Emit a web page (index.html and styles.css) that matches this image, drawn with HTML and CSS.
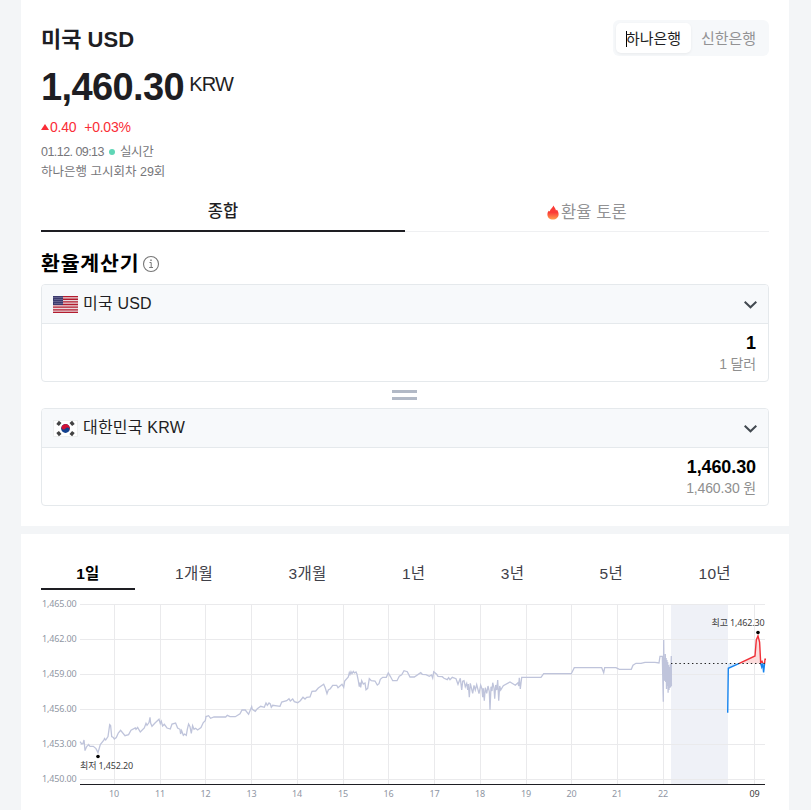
FILE: index.html
```
<!DOCTYPE html>
<html lang="ko">
<head>
    <meta charset="UTF-8">
    <meta name="viewport" content="width=device-width, initial-scale=1.0">
    <title>미국 USD 환율</title>
    <link rel="stylesheet" href="styles.css">
</head>
<body>
    <main>
        <section class="card summary">
            <header class="top">
                <h1>미국 USD</h1>
                <div class="bank-switch">
                    <button class="bank active">하나은행</button>
                    <button class="bank">신한은행</button>
                </div>
            </header>

            <div class="price"><strong>1,460.30</strong><span>KRW</span></div>
            <div class="change"><i class="up"></i><span>0.40</span><span>+0.03%</span></div>
            <div class="meta"><span class="num">01.12. 09:13</span><i class="dot"></i><span>실시간</span></div>
            <div class="meta round">하나은행 고시회차 29회</div>

            <nav class="tabs">
                <a class="tab active">종합</a>
                <a class="tab">
                    <svg width="12" height="15" viewBox="0 0 12 15">
                        <defs>
                            <linearGradient id="fire" x1="0" y1="0" x2="0" y2="1">
                                <stop offset="0.5" stop-color="#fa3c37"/>
                                <stop offset="1" stop-color="#ffa04d"/>
                            </linearGradient>
                        </defs>
                        <path fill="url(#fire)" d="M6.6 0.5C7 2.4 8.6 3.2 9 5.6L10 4.8C11 6.2 11.6 7.8 11.6 9.2C11.6 12.4 9.2 14.5 5.9 14.5C2.6 14.5 0.4 12.3 0.4 9.4C0.4 7.7 1 6.6 1.8 5.7L2.7 6.5C3.2 3.7 5.6 3 6.6 0.5Z"/>
                    </svg>환율 토론</a>
            </nav>

            <!-- Exchange calculator -->
            <h2>환율계산기
                <svg width="18" height="18" viewBox="0 0 18 18">
                    <circle cx="9" cy="9" r="7.5" fill="none" stroke="#777" stroke-width="1.1"/>
                    <path d="M7.5 7.5H9.2V12.5M7.2 12.5H11" fill="none" stroke="#777"/>
                    <rect x="8.3" y="4.5" width="1.4" height="1.5" fill="#777"/>
                </svg>
            </h2>

            <div class="box">
                <div class="box-head">
                    <svg class="flag" width="25" height="17" viewBox="0 0 25 17">
                        <rect width="25" height="17" fill="#e9d9dd"/>
                        <path d="M0 .5H25M0 3.2H25M0 5.8H25M0 8.5H25M0 11.1H25M0 13.8H25M0 16.4H25" stroke="#b31c2f" stroke-width="1.35"/>
                        <rect width="10" height="9" fill="#3c3b6e"/>
                        <path d="M.5 1.5H10M1.5 3.5H10M.5 5.5H10M1.5 7.5H10" stroke="#8887ab" stroke-width="1" stroke-dasharray="1 1"/>
                    </svg>
                    <span>미국 USD</span>
                    <svg class="arrow" width="14" height="9" viewBox="0 0 14 9"><path d="M1.7 1.7L7.5 7.3L13.3 1.7"/></svg>
                </div>
                <div class="box-body">
                    <strong>1</strong>
                    <em>1 달러</em>
                </div>
            </div>

            <div class="equals"><i></i><i></i></div>

            <div class="box">
                <div class="box-head">
                    <svg class="flag" width="25" height="17" viewBox="0 0 25 17">
                        <rect x=".5" y=".5" width="24" height="16" fill="#fff" stroke="#eef0f0"/>
                        <circle cx="12.5" cy="8.5" r="4.4" fill="#14428f"/>
                        <path d="M8.8 6.1A4.4 4.4 0 0 1 16.2 10.9A2.2 2.2 0 0 0 12.5 8.5A2.2 2.2 0 0 1 8.8 6.1Z" fill="#d21034"/>
                        <path d="M4.6 5L7.2 1.9M17.8 1.9L20.4 5M4.6 12L7.2 15.1M17.8 15.1L20.4 12" stroke="#444" stroke-width="3.4"/>
                    </svg>
                    <span>대한민국 KRW</span>
                    <svg class="arrow" width="14" height="9" viewBox="0 0 14 9"><path d="M1.7 1.7L7.5 7.3L13.3 1.7"/></svg>
                </div>
                <div class="box-body">
                    <strong>1,460.30</strong>
                    <em>1,460.30 원</em>
                </div>
            </div>
        </section>

        <section class="card chart">
            <nav class="periods">
                <a class="active">1일</a>
                <a>1개월</a>
                <a>3개월</a>
                <a>1년</a>
                <a>3년</a>
                <a>5년</a>
                <a>10년</a>
            </nav>

            <svg class="graph" width="728" height="220" viewBox="41 590 728 220">
                <!-- Closed market hours -->
                <rect x="671" y="604" width="57" height="180" fill="#eff1f7"/>
                <path class="grid" d="M80 604.5H765M80 639.5H765M80 674.5H765M80 709.5H765M80 744.5H765M80 779.5H765"/>
                <path class="grid" d="M114.5 604V784M160.5 604V784M205.5 604V784M251.5 604V784M297.5 604V784M343.5 604V784M388.5 604V784M434.5 604V784M480.5 604V784M526.5 604V784M571.5 604V784M617.5 604V784M663.5 604V784M754.5 604V784"/>

                <polyline class="prev" points="80,741.7 81.7,744 83,743.5 84,740 85,750.6 86.7,746.6 88.6,744.5 90,746.3 93.3,746.3 96,748.6 98,752.6 100.3,744.6 104,740 104.5,738.5 105.7,740 108,736.6 109.7,724.6 110.6,725.5 111.7,736.6 113.3,737.4 114.3,739 116.3,737.6 118.3,733 120.6,730.3 125,735.7 128.6,734.6 131,730.3 135.3,728 136,729.3 137.6,727.4 140.3,732 144.3,728 146,723.3 147,725.3 149,722.6 150,717.3 150.7,723.3 152,726.3 155,723 159,719.3 160.3,723.6 161.3,721.3 162.6,726 164.3,724.3 167,728 170.3,729 172,724 175.6,723 177.6,728 180,729.3 180.6,734 181.6,730.6 183.3,735.3 184.6,734 186.3,735.3 187.3,729.3 188.6,724 190,726.6 191.3,733.3 192.6,725.7 194,729.3 195.6,728.3 197.6,730 201,727.6 203.3,722.6 205.3,720.6 206,716.6 208.6,715.7 210.6,718.3 214,717 225.7,717 227.3,715.3 230,716.7 235.3,716.7 240,713.7 242,710 245.3,710 248.6,714.3 251.7,706.7 252.3,709.3 255.3,711.3 257.3,708.7 260.7,706.3 264.3,707.3 266,703 267.3,705.3 269,703 270.3,704 271.3,707.3 272.7,705.3 280,706.3 281.7,702 286.7,700.7 289,698.7 290.3,701 292.7,699 294.3,701.7 297.7,702.7 300.3,700.7 303,697.3 305,699 306.7,697.3 310,697 312,691.3 315.7,691 318.3,688 323.7,684.3 325.3,688 327,693.7 328.3,690 330.3,688.7 332.7,685.3 336.7,685.3 338,687.7 342,684.3 343.7,687.3 344.7,681 348.3,677 349.3,672.7 350,674.5 351,671.7 352,673.7 353.3,671.5 354.5,673 356,672 357,674.3 358.3,680.7 359.3,686.7 360,682.7 360.7,687.3 361.7,680.7 363.3,684 365,683 366,689.7 367.7,688.3 369.3,678.7 371.3,680.7 375,681 377.3,685 379,683.7 380.3,679.3 382.7,677.3 386.3,677.3 388.3,673 390.3,676.3 392.7,680.7 397,680.7 399.3,676.3 401.7,674.7 404,670.7 407.3,671.7 410,677 414.3,677 420.7,672.7 422.3,674.3 426,674.7 429.3,676.3 431.5,675 432.7,678 433.7,671.7 436.7,674.3 438,676.3 442.3,676.7 444,678.3 447.3,679.7 448.6,677.7 450,679.7 452.3,677.3 456,678.7 458,684.3 460.3,678.3 461.7,690 462.7,681.3 464,680.7 465.3,686.7 466.7,683.3 467.7,690 468.3,684 469.3,697.3 470.3,683.3 472.7,693.3 474,685.3 475.3,690 476.7,684.7 479,693.7 480.7,685.3 482,689 482.7,697.3 483.3,688.3 484.3,700.7 485.3,687.7 486.7,693.3 488,686 489.3,691.7 490,709.7 491,686.7 492,691 492.7,682.7 494,688 494.7,698.7 495.7,685 496.7,690 497.7,680 498.7,700.7 499.7,686 500.7,690 503.3,685.7 510,682 515.3,685.3 518,682.7 518.7,686 519.3,677.7 520.3,689 521.7,677.3 541,677.3 543.7,673.7 571.3,673.7 574.3,667.7 601.7,667.7 603.7,672.7 604.7,667.7 616,667.7 619.3,669.3 631.3,669.3 633,665.3 636,663.3 641,663.3 645,662.3 655,662.3 659,663 660,656.3 662.3,656.3 663.3,701.7 663.7,640 664.1,680 664.5,658 664.9,681 665.3,654 665.7,682 666.1,658 666.5,689 666.9,660 667.3,686 667.7,662 668.1,692.7 668.6,665 669,690 669.4,667 669.9,688 670.4,664 670.7,687 671.3,656 671.4,686"/>

                <!-- Today -->
                <path d="M728 712V668L739 663.5H728Z" fill="#d4e8fd"/>
                <path d="M739 663.5L755 656L756 640L758 636L760 642L761 663.5Z" fill="#fcdcdc"/>
                <polyline class="fall" points="727.7,712.7 728.3,668.3 739.3,663.3"/>
                <polyline class="rise" points="739.3,663.3 755,656 756.3,640 758,636 759.6,642 760.7,663 762,661.3 763,663.3"/>
                <polyline class="fall" points="760.7,663.3 761.7,667 762.7,663.5 763.6,672.5 764.6,663.5"/>
                <polyline class="rise" points="764.6,663.5 765,659.3 766,659.3"/>
                <path d="M671 663.5H767" stroke="#222" stroke-width="1.2" stroke-dasharray="1.4 2.8"/>
                <path d="M80 784.5H765" stroke="#1e1e23"/>

                <circle cx="98" cy="756.5" r="1.8"/>
                <circle cx="758" cy="632.5" r="1.8"/>
                <text class="note" x="80" y="768.5">최저 1,452.20</text>
                <text class="note" x="711.5" y="625.5">최고 1,462.30</text>

                <g class="axis">
                    <text x="42" y="606.5">1,465.00</text>
                    <text x="42" y="641.5">1,462.00</text>
                    <text x="42" y="676.5">1,459.00</text>
                    <text x="42" y="711.5">1,456.00</text>
                    <text x="42" y="746.5">1,453.00</text>
                    <text x="42" y="781.5">1,450.00</text>
                </g>
                <g class="axis hours">
                    <text x="114" y="796.5">10</text>
                    <text x="160" y="796.5">11</text>
                    <text x="205.5" y="796.5">12</text>
                    <text x="251.5" y="796.5">13</text>
                    <text x="297" y="796.5">14</text>
                    <text x="343" y="796.5">15</text>
                    <text x="388.5" y="796.5">16</text>
                    <text x="434.5" y="796.5">17</text>
                    <text x="480" y="796.5">18</text>
                    <text x="526" y="796.5">19</text>
                    <text x="571.5" y="796.5">20</text>
                    <text x="617" y="796.5">21</text>
                    <text x="663" y="796.5">22</text>
                    <text x="754.5" y="796.5" class="today">09</text>
                </g>
            </svg>
        </section>
    </main>
</body>
</html>
```
FILE: styles.css
```
/* General Styles */
* {
    box-sizing: border-box;
}

body {
    margin: 0;
    height: 810px;
    overflow: hidden;
    background-color: #f3f5f7;
    color: #1e1e23;
    font-family: "Liberation Sans", "Noto Sans CJK KR", sans-serif;
}

main {
    width: 768px;
    margin-left: 21px;
}

.card {
    background: #fff;
    padding: 0 20px;
}

.summary {
    height: 526px;
    padding-top: 20px;
}

/* Title and bank switch */
.top {
    display: flex;
    justify-content: space-between;
    height: 36px;
}

h1 {
    margin: 0;
    font-size: 22px;
    line-height: 39px;
    font-weight: bold;
}

.bank-switch {
    display: flex;
    width: 156px;
    height: 36px;
    padding: 3px;
    border-radius: 6px;
    background: #f6f8fa;
}

.bank {
    width: 75px;
    height: 30px;
    padding: 1px 0 0;
    border: 0;
    border-radius: 5px;
    background: none;
    color: #929294;
    font-family: inherit;
    font-size: 15px;
    line-height: 30px;
}

.bank.active {
    background: #fff;
    color: #1e1e23;
    box-shadow: 0 1px 3px rgba(0, 0, 0, 0.06);
}

.bank.active::before {
    content: "";
    display: inline-block;
    width: 1px;
    height: 16px;
    margin-right: -1px;
    background: #000;
    vertical-align: -3px;
}

/* Price */
.price {
    display: flex;
    height: 60px;
    line-height: 62px;
}

.price strong {
    font-size: 38px;
    letter-spacing: -0.6px;
}

.price span {
    margin-left: 5px;
    font-size: 20px;
    line-height: 56px;
    letter-spacing: -0.8px;
}

.change {
    display: flex;
    align-items: center;
    height: 22px;
    color: #fa2d37;
    font-size: 14px;
    letter-spacing: -0.25px;
}

.change span + span {
    margin-left: 8px;
}

.up {
    margin-right: 1px;
    border: 4px solid transparent;
    border-top: 0;
    border-bottom: 6px solid #fa2d37;
}

.meta {
    display: flex;
    align-items: center;
    height: 20px;
    margin-top: 4px;
    color: #76767a;
    font-size: 12.5px;
    line-height: 20px;
    letter-spacing: -0.3px;
}

.num {
    letter-spacing: -0.55px;
}

.round {
    margin-top: 0;
    letter-spacing: 0;
}

.dot {
    width: 6px;
    height: 6px;
    margin: 0 5px;
    border-radius: 50%;
    background: #5fd6b6;
}

/* Tabs */
.tabs {
    display: flex;
    height: 40px;
    margin-top: 10px;
    border-bottom: 1px solid #eff0f2;
}

.tab {
    display: flex;
    flex: 1;
    justify-content: center;
    align-items: center;
    height: 40px;
    color: #929294;
    font-size: 16.5px;
    line-height: 38px;
    letter-spacing: 0.1px;
}

.tab svg {
    margin-right: 2px;
}

.tab.active {
    border-bottom: 2px solid #1e1e23;
    color: #1e1e23;
    font-weight: 500;
}

/* Calculator */
h2 {
    display: flex;
    align-items: center;
    height: 32px;
    margin: 16px 0 4px;
    color: #000;
    font-size: 20.5px;
    font-weight: bold;
    line-height: 32px;
    letter-spacing: 0.8px;
}

h2 svg {
    margin-left: 3px;
}

.box {
    height: 98px;
    border: 1px solid #e5e9ec;
    border-radius: 4px;
    overflow: hidden;
}

.box-head {
    display: flex;
    align-items: center;
    height: 39px;
    padding: 0 11px;
    border-bottom: 1px solid #e5e9ec;
    background: #f7f9fb;
    font-size: 16px;
    letter-spacing: 0.2px;
}

.box-head span {
    margin-left: 5px;
    line-height: 36px;
}

.arrow {
    margin-left: auto;
    fill: none;
    stroke: #424950;
    stroke-width: 2;
}

.box-body {
    display: flex;
    flex-direction: column;
    align-items: flex-end;
    padding: 9px 12px 0;
}

.box-body strong {
    color: #000;
    font-size: 18px;
    line-height: 21px;
    letter-spacing: -0.1px;
}

.box-body em {
    color: #8f8f8f;
    font-size: 14px;
    font-style: normal;
    line-height: 21px;
    letter-spacing: -0.15px;
}

.equals {
    display: flex;
    flex-direction: column;
    align-items: center;
    gap: 4px;
    height: 26px;
    padding: 8px 2px 0 0;
}

.equals i {
    width: 25px;
    height: 3px;
    background: #b2b9c6;
}

/* Chart */
.chart {
    height: 276px;
    margin-top: 8px;
    padding-top: 24px;
}

.periods {
    display: flex;
    gap: 5px;
    height: 32px;
}

.periods a {
    flex: none;
    padding: 0 35.2px;
    color: #404048;
    font-size: 15.5px;
    line-height: 32px;
    letter-spacing: 0.3px;
    white-space: nowrap;
}

.periods .active {
    border-bottom: 2px solid #1e1e23;
    color: #000;
    font-weight: bold;
}

.graph {
    display: block;
}

.grid {
    stroke: #eaeaec;
}

.prev,
.rise,
.fall {
    fill: none;
    stroke: #bfc4db;
    stroke-width: 1.3;
}

.rise {
    stroke: #f03038;
    stroke-width: 1.4;
}

.fall {
    stroke: #1583ee;
    stroke-width: 1.4;
}

.axis,
.note {
    font-family: "Noto Sans", "Noto Sans CJK KR", sans-serif;
    font-size: 9px;
    letter-spacing: -0.15px;
    fill: #8f96a3;
}

.note,
.today {
    fill: #404040;
}

.hours {
    text-anchor: middle;
}
```
